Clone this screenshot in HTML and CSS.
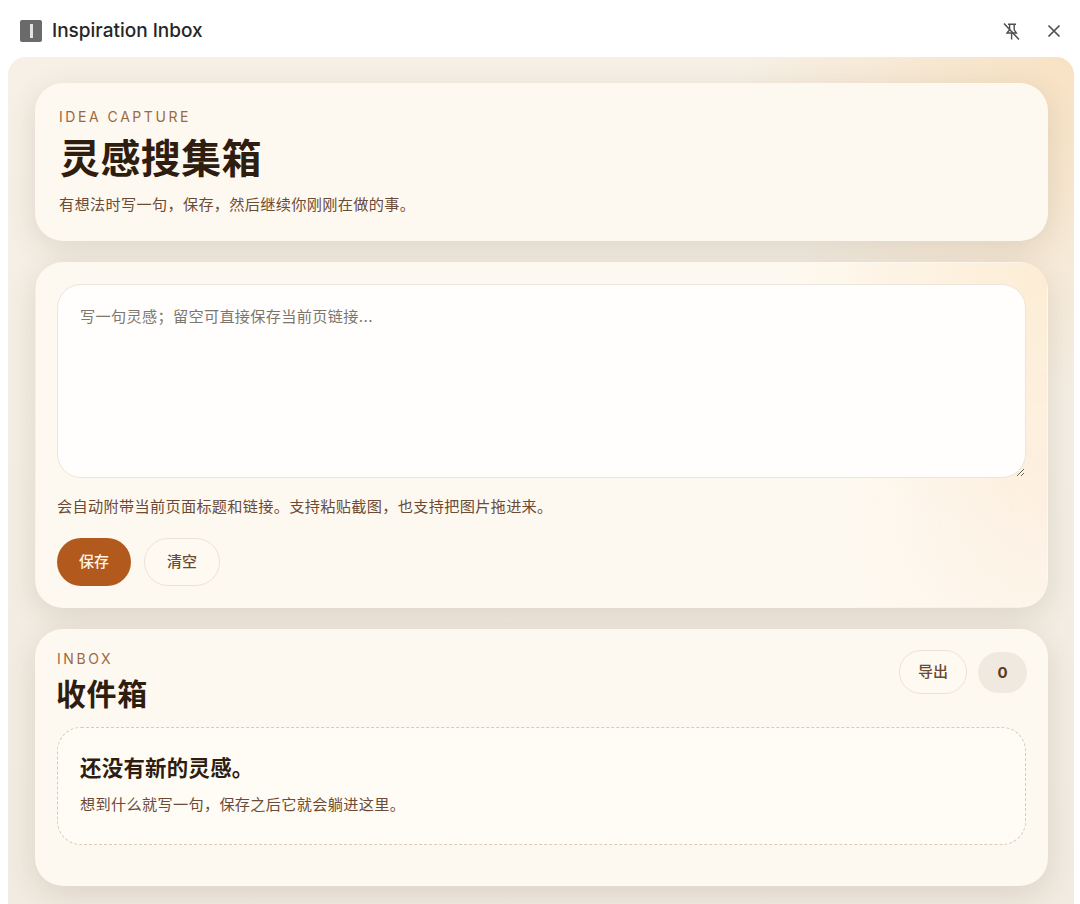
FILE: index.html
```html
<!DOCTYPE html>
<html lang="zh-CN">
<head>
<meta charset="utf-8">
<title>Inspiration Inbox</title>
<link rel="stylesheet" href="styles.css">
</head>
<body>
<header class="titlebar">
  <div class="tb-left">
    <span class="tb-logo"><span class="tb-logo-bar"></span></span>
    <span class="tb-title">Inspiration Inbox</span>
  </div>
  <div class="tb-right">
    <svg class="tb-icon" width="20" height="20" viewBox="0 0 20 20" fill="none" stroke="#4f4f4f" stroke-width="1.4">
      <path d="M7 3.2h8M8.6 3.4v5.4L6 12h9.4l-2.2-3.2V3.4M10.6 12v6.5"/>
      <path d="M3 2.5L18 18.5" stroke-width="1.5"/>
    </svg>
    <svg class="tb-icon" width="20" height="20" viewBox="0 0 20 20" fill="none" stroke="#4f4f4f" stroke-width="1.7">
      <path d="M4.5 4.5l11 11M15.5 4.5l-11 11"/>
    </svg>
  </div>
</header>
<main class="panel">
  <section class="card hero">
    <div class="eyebrow">IDEA CAPTURE</div>
    <h1 class="hero-title">灵感搜集箱</h1>
    <p class="muted">有想法时写一句，保存，然后继续你刚刚在做的事。</p>
  </section>
  <section class="card composer">
    <textarea class="input" placeholder="写一句灵感；留空可直接保存当前页链接..."></textarea>
    <p class="muted hint">会自动附带当前页面标题和链接。支持粘贴截图，也支持把图片拖进来。</p>
    <div class="actions">
      <button class="btn btn-primary">保存</button>
      <button class="btn btn-ghost">清空</button>
    </div>
  </section>
  <section class="card inbox">
    <div class="inbox-head">
      <div>
        <div class="eyebrow eyebrow-sm">INBOX</div>
        <h2 class="inbox-title">收件箱</h2>
      </div>
      <div class="inbox-tools">
        <button class="btn btn-ghost btn-sm">导出</button>
        <span class="count">0</span>
      </div>
    </div>
    <div class="empty">
      <h3 class="empty-title">还没有新的灵感。</h3>
      <p class="muted empty-text">想到什么就写一句，保存之后它就会躺进这里。</p>
    </div>
  </section>
</main>
</body>
</html>
```
FILE: styles.css
```css
* { box-sizing: border-box; }
html, body { margin: 0; height: 904px; overflow: hidden; background: #fff; }
body {
  font-family: Inter, "Noto Sans CJK SC", sans-serif;
  color: #2f1d10;
  display: flex;
  flex-direction: column;
}
.titlebar {
  height: 57px;
  flex: none;
  display: flex;
  align-items: center;
  justify-content: space-between;
  padding: 4px 16px 0 20px;
}
.tb-left { display: flex; align-items: center; gap: 10px; }
.tb-logo {
  width: 22px; height: 22px;
  background: #6a6a6a;
  border-radius: 2px;
  display: flex; align-items: center; justify-content: center;
}
.tb-logo-bar { width: 3px; height: 14px; background: #e2e2e2; }
.tb-title { font-size: 19px; font-weight: 500; color: #262626; }
.tb-right { display: flex; align-items: center; gap: 23px; }
.tb-icon { display: block; }

.panel {
  flex: 1;
  margin: 0 6px 0 8px;
  padding: 26px 26px 0 27px;
  border-radius: 18px 18px 0 0;
  display: flex;
  flex-direction: column;
  gap: 21px;
  background:
    radial-gradient(circle at 100% 0, rgba(248,222,186,.8), rgba(248,222,186,0) 340px),
    linear-gradient(180deg, #f6f0e6 0, #f1ebe1 100%);
  overflow: hidden;
}
.card {
  background: #fef9f0;
  border: 1px solid transparent;
  border-radius: 28px;
  box-shadow: 0 8px 30px rgba(90,65,35,.14);
  flex: none;
}
.hero { height: 158px; padding: 24px 23px 0; }
.eyebrow {
  font-size: 14px;
  line-height: 17px;
  letter-spacing: 2.55px;
  color: #9a6a3f;
}
.hero-title {
  margin: 9px 0 0 1px;
  font-size: 40px;
  line-height: 50px;
  font-weight: 700;
  letter-spacing: .4px;
  color: #2f1d10;
}
.muted {
  margin: 0;
  font-size: 15.2px;
  line-height: 20px;
  font-weight: 400;
  letter-spacing: .3px;
  color: #6c4b36;
}
.hero .muted { margin-top: 11px; }

.composer {
  height: 346px;
  padding: 21px 21px 0;
  background:
    radial-gradient(circle at 100% 5%, rgba(252,226,190,.55), rgba(252,226,190,0) 260px),
    radial-gradient(circle at 100% 70%, rgba(253,232,215,.5), rgba(253,232,215,0) 200px),
    #fef9f0;
}
.input {
  display: block;
  width: 100%;
  height: 194px;
  padding: 22px;
  border: 1px solid #ece5da;
  border-radius: 24px;
  background: #fffefc;
  font: 15.2px/20px Inter, "Noto Sans CJK SC", sans-serif;
  letter-spacing: .3px;
  color: #2f1d10;
  outline: none;
}
.input::placeholder { color: #7d766f; }
.hint { margin-top: 19px; }
.actions { display: flex; gap: 13px; margin-top: 21px; }
.btn {
  height: 48px;
  padding: 0;
  border-radius: 24px;
  font: 500 15px/20px Inter, "Noto Sans CJK SC", sans-serif;
}
.btn-primary { background: #b25a1e; color: #fff3e6; border: 0; width: 74px; }
.btn-ghost { background: #fef9f1; color: #6a4a32; border: 1px solid #ebe3d8; width: 76px; }
.btn-sm { height: 44px; width: 68px; }

.inbox { height: 257px; padding: 20px 20px 0 21px; }
.inbox-head { display: flex; justify-content: space-between; align-items: flex-start; }
.eyebrow-sm { letter-spacing: 2.6px; }
.inbox-title {
  margin: 7px 0 0 -1px;
  font-size: 30px;
  line-height: 40px;
  font-weight: 700;
  letter-spacing: .6px;
  color: #2f1d10;
}
.inbox-tools { display: flex; align-items: center; gap: 11px; }
.count {
  width: 49px; height: 41px;
  border-radius: 21px;
  background: #efe9df;
  display: flex; align-items: center; justify-content: center;
  font-size: 15px;
  font-weight: 700;
  color: #5a3a20;
}
.empty {
  margin: 13px 1px 0 0;
  height: 118px;
  padding: 26px 22px 0;
  border: 1px dashed #d6ccba;
  border-radius: 24px;
  background: #fffcf5;
}
.empty-title {
  margin: 0;
  font-size: 21.4px;
  line-height: 28px;
  font-weight: 700;
  letter-spacing: .3px;
  color: #2f1d10;
}
.empty-text { margin-top: 13px; }
```
